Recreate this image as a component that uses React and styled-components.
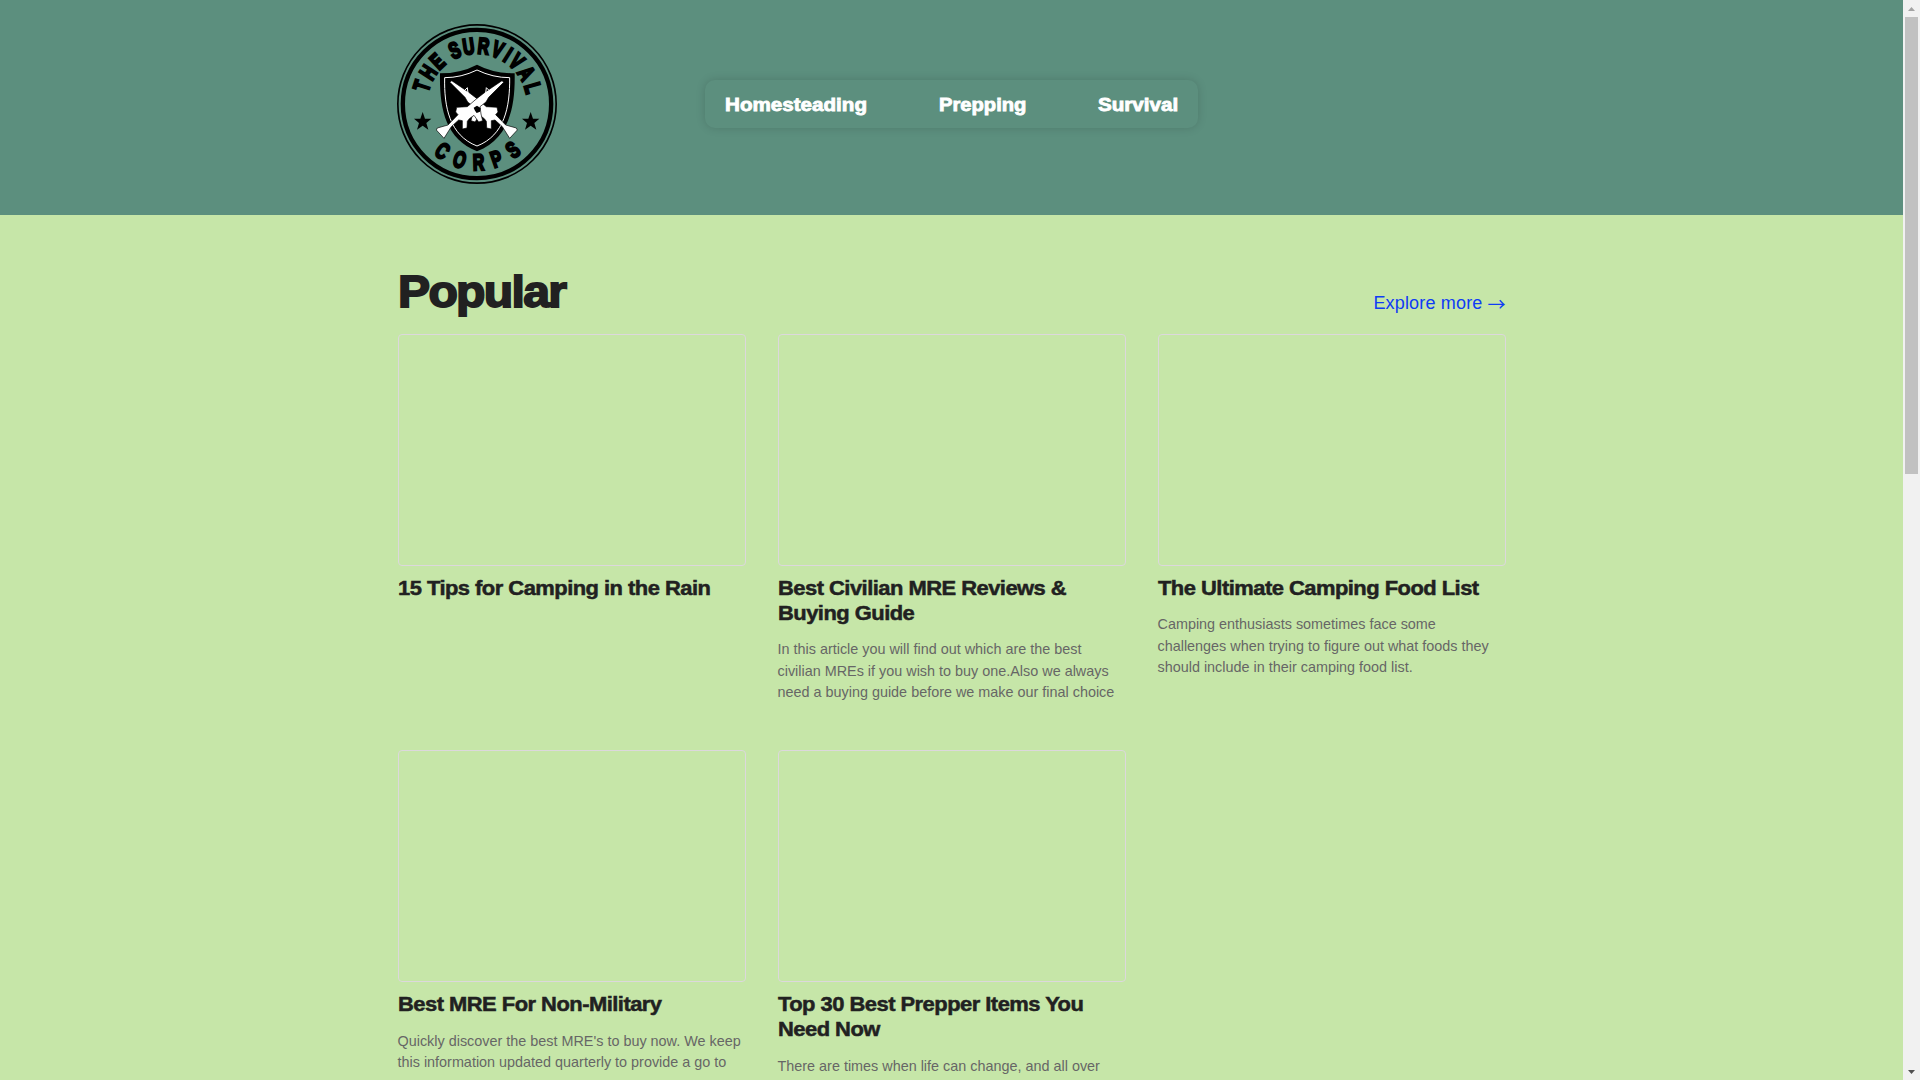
import React from 'react';
import styled, { createGlobalStyle } from 'styled-components';

const Global = createGlobalStyle`
  * { box-sizing: border-box; }
  body { margin: 0; background: #c6e6a8; color: #212121; font-family: "Liberation Sans", Arial, sans-serif; }
  h1, h2, p { margin: 0; }
  a { color: inherit; text-decoration: none; }
`;

const Viewport = styled.div`
  display: grid;
  grid-template-columns: 1fr 17px;
  height: 1080px;
  overflow: hidden;
`;
const Page = styled.div`
  height: 1080px;
  overflow: hidden;
`;
const Header = styled.header`
  height: 215px;
  background: #5c8f7e;
`;
const HeaderInner = styled.div`
  display: flex;
  width: 1108px;
  margin: 0 auto;
  padding-top: 24px;
`;
const Logo = styled.svg`
  display: block;
  width: 160px;
  height: 160px;
  margin-left: -1px;
`;
const Nav = styled.nav`
  display: flex;
  align-items: center;
  gap: 72px;
  width: 493px;
  height: 48px;
  margin: 56px 0 0 148px;
  padding: 2px 20px 0;
  border-radius: 10px;
  box-shadow: 0 0 10px rgba(0, 0, 0, 0.15);
`;
const NavLink = styled.a`
  flex: none;
  width: ${(p) => p.$width}px;
  color: #fff;
  font-size: 18px;
  font-weight: 700;
  line-height: 24px;
  white-space: nowrap;
  transform: scaleX(${(p) => p.$stretch});
  transform-origin: left;
  -webkit-text-stroke: 0.8px #fff;
`;
const Main = styled.main`
  width: 1108px;
  margin: 0 auto;
  padding-top: 48px;
`;
const SectionHead = styled.div`
  display: flex;
  justify-content: space-between;
  align-items: flex-end;
  height: 70.6px;
  padding-bottom: 16.6px;
`;
const SectionTitle = styled.h1`
  font-size: 44.8px;
  line-height: 51px;
  font-weight: 700;
  letter-spacing: -1.6px;
  transform: scaleX(1.075);
  transform-origin: left;
  -webkit-text-stroke: 1.8px #212121;
`;
const MoreLink = styled.a`
  display: flex;
  align-items: center;
  color: #0f3cf5;
  font-size: 18px;
  line-height: 28px;
  letter-spacing: 0.17px;
`;
const MoreArrow = styled.span`
  margin-left: 5px;
  font-family: "Noto Sans CJK JP", sans-serif;
  font-size: 18px;
  line-height: 28px;
  letter-spacing: 0;
`;
const Grid = styled.div`
  display: grid;
  grid-template-columns: repeat(3, 348px);
  column-gap: 32px;
  row-gap: 46.4px;
`;
const Card = styled.article`
  display: flex;
  flex-direction: column;
`;
const Picture = styled.div`
  height: 232.3px;
  border: 1px solid #dcd8dc;
  border-radius: 4px;
`;
const CardTitle = styled.h2`
  margin-top: 8.7px;
  font-size: 20.8px;
  line-height: 25px;
  font-weight: 700;
  letter-spacing: -0.5px;
  transform: scaleX(1.055);
  transform-origin: left;
  -webkit-text-stroke: 0.5px #212121;
`;
const Line = styled.span`
  display: block;
  white-space: nowrap;
`;
const Summary = styled.p`
  margin-top: 14.4px;
  color: #666;
  font-size: 14.4px;
  line-height: 21.6px;
`;
const Scrollbar = styled.div`
  display: flex;
  flex-direction: column;
  align-items: center;
  justify-content: space-between;
  height: 1080px;
  background: #f1f1f1;
`;
const Arrow = styled.svg`
  display: block;
  width: 17px;
  height: 17px;
`;
const Thumb = styled.div`
  width: 13px;
  height: 457px;
  margin-bottom: auto;
  background: #c1c1c1;
`;

const cards = [
  { title: ['15 Tips for Camping in the Rain'], text: [] },
  {
    title: ['Best Civilian MRE Reviews &', 'Buying Guide'],
    text: ['In this article you will find out which are the best', 'civilian MREs if you wish to buy one.Also we always', 'need a buying guide before we make our final choice'],
  },
  {
    title: ['The Ultimate Camping Food List'],
    text: ['Camping enthusiasts sometimes face some', 'challenges when trying to figure out what foods they', 'should include in their camping food list.'],
  },
  {
    title: ['Best MRE For Non-Military'],
    text: ["Quickly discover the best MRE's to buy now. We keep", 'this information updated quarterly to provide a go to'],
  },
  {
    title: ['Top 30 Best Prepper Items You', 'Need Now'],
    text: ['There are times when life can change, and all over'],
  },
];

const top = [['T', -72], ['H', -57], ['E', -43], ['S', -22.5], ['U', -8.5], ['R', 6.6], ['V', 21], ['I', 32.2], ['V', 43], ['A', 58], ['L', 74]];
const bottom = [['C', 36.3], ['O', 17.3], ['R', -1.5], ['P', -19.4], ['S', -38]];

const Rifle = () => (
  <g>
    <path d="M366 212 L371 217 L326 262 L318 276 L300 290 L303 312 L308 332 L296 336 L282 316 L268 326 L262 334 L261 354 L247 357 L247 332 L236 330 L214 350 L192 385 L169 360 L172 354 L204 345 L234 314 L227 306 L230 292 L262 290 L290 266 L316 246 Z" />
    <path d="M317 250 L319 233 L328 242 L327 254" fill="none" stroke="#fff" strokeWidth="3" />
  </g>
);

function Emblem() {
  return (
    <Logo viewBox="51 42 480 480" role="img" aria-label="The Survival Corps">
      <circle cx="291" cy="282" r="237.5" fill="none" stroke="#000" strokeWidth="5" />
      <circle cx="291" cy="282" r="222.5" fill="none" stroke="#000" strokeWidth="13" />
      <g fontFamily="Liberation Sans, Arial, sans-serif" fontWeight="700" fontSize="68" textAnchor="middle" stroke="#000" strokeWidth="7">
        {top.map(([c, a], i) => (
          <text key={i} transform={`translate(291 282) rotate(${a}) translate(0 -151) scale(.7 1)`}>{c}</text>
        ))}
        {bottom.map(([c, a], i) => (
          <text key={i} transform={`translate(291 282) rotate(${a}) translate(0 198) scale(.7 1)`}>{c}</text>
        ))}
      </g>
      <path d="M291 164 Q340 190 404 190 C406 292 388 385 291 424 C194 385 178 292 180 190 Q242 190 291 164 Z" />
      <path d="M291 180 Q338 203 389 203 C390 290 374 376 291 408 C208 376 192 290 194 203 Q244 203 291 180 Z" fill="none" stroke="#fff" strokeWidth="3" />
      <g fill="#fff" stroke="#000" strokeWidth="2">
        <g transform="translate(581 0) scale(-1 1)"><Rifle /></g>
        <Rifle />
      </g>
      <path d="M281 293 L291 287 L302 294 L300 305 L290 309 L285 302 Z" />
      {[128, 452].map((x) => (
        <path key={x} transform={`translate(${x} 334)`} d="M0 -28 L7 -8 L26 -8 L11 5 L17 25 L0 13 L-17 25 L-11 5 L-26 -8 L-7 -8 Z" />
      ))}
    </Logo>
  );
}

export default function App() {
  return (
    <>
      <Global />
      <Viewport>
        <Page>
          <Header>
            <HeaderInner>
              <Emblem />
              <Nav>
                <NavLink href="#" $width={142} $stretch={1.145}>Homesteading</NavLink>
                <NavLink href="#" $width={87} $stretch={1.12}>Prepping</NavLink>
                <NavLink href="#" $width={80} $stretch={1.145}>Survival</NavLink>
              </Nav>
            </HeaderInner>
          </Header>
          <Main>
            <SectionHead>
              <SectionTitle>Popular</SectionTitle>
              <MoreLink href="#">Explore more<MoreArrow>→</MoreArrow></MoreLink>
            </SectionHead>
            <Grid>
              {cards.map((card) => (
                <Card key={card.title[0]}>
                  <Picture />
                  <CardTitle>{card.title.map((t) => <Line key={t}>{t}</Line>)}</CardTitle>
                  <Summary>{card.text.map((t) => <Line key={t}>{t}</Line>)}</Summary>
                </Card>
              ))}
            </Grid>
          </Main>
        </Page>
        <Scrollbar>
          <Arrow viewBox="0 0 17 17"><path d="M5 11 H12 L8.5 7 Z" fill="#a3a3a3" /></Arrow>
          <Thumb />
          <Arrow viewBox="0 0 17 17"><path d="M5 7 H12 L8.5 11 Z" fill="#505050" /></Arrow>
        </Scrollbar>
      </Viewport>
    </>
  );
}
